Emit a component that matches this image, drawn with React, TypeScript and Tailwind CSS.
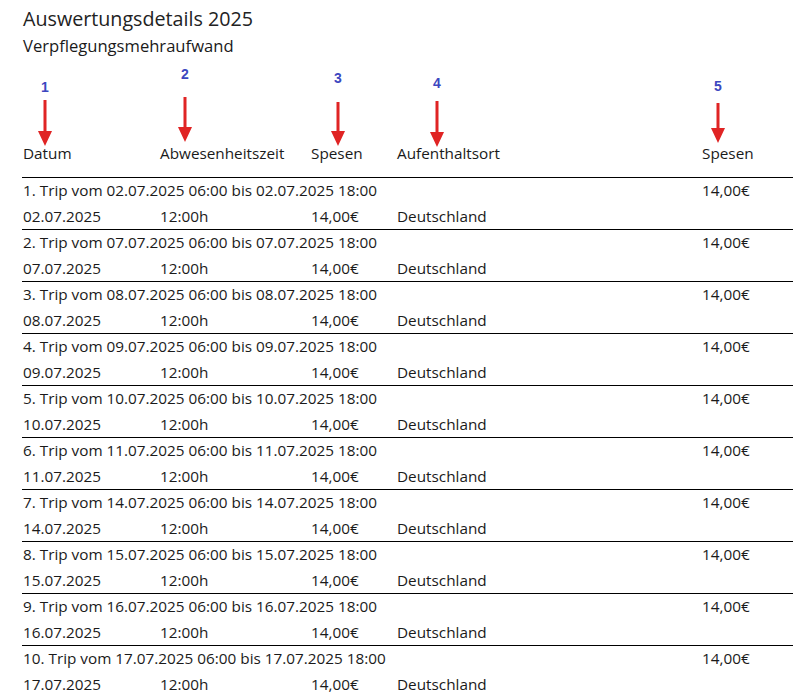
import React from "react";

const trips = [
  { n: 1, d: "02.07.2025" },
  { n: 2, d: "07.07.2025" },
  { n: 3, d: "08.07.2025" },
  { n: 4, d: "09.07.2025" },
  { n: 5, d: "10.07.2025" },
  { n: 6, d: "11.07.2025" },
  { n: 7, d: "14.07.2025" },
  { n: 8, d: "15.07.2025" },
  { n: 9, d: "16.07.2025" },
  { n: 10, d: "17.07.2025" },
];

function Marker({ x, numY, top, tip, label }: { x: number; numY: number; top: number; tip: number; label: string }) {
  const h = tip - top;
  return (
    <>
      <div
        className="absolute w-[20px] -ml-[10px] text-center text-[14px] leading-[16px] font-bold text-[#3c47c0] [font-family:'Liberation_Sans',Arial,sans-serif]"
        style={{ left: x, top: numY - 8 }}
      >
        {label}
      </div>
      <svg
        className="absolute"
        width={16}
        height={h}
        viewBox={`0 0 16 ${h}`}
        style={{ left: x - 8, top }}
      >
        <rect x={6.5} y={0} width={3} height={h - 14} fill="#e02424" />
        <polygon points={`1,${h - 15} 15,${h - 15} 8,${h}`} fill="#e02424" />
      </svg>
    </>
  );
}

export default function App() {
  return (
    <div className="relative w-[805px] h-[698px] overflow-hidden bg-white text-[#1a1a1a] [font-family:'Open_Sans',sans-serif]">
      <div className="pl-[23px] pt-[5px] text-[19.7px] leading-[28px] text-[#222]">Auswertungsdetails 2025</div>
      <div className="pl-[23px] mt-[2px] text-[16.6px] leading-[21px]">Verpflegungsmehraufwand</div>

      <Marker x={45} numY={87} top={100} tip={146} label="1" />
      <Marker x={185} numY={74} top={97} tip={142} label="2" />
      <Marker x={338} numY={78} top={102} tip={146} label="3" />
      <Marker x={437} numY={83} top={101} tip={147} label="4" />
      <Marker x={718} numY={86} top={103} tip={143} label="5" />

      <div className="ml-[22px] w-[771px] pt-[84px] text-[15.3px]">
        <div className="grid grid-cols-[137px_151px_86px_305px_1fr] pl-[1px] leading-[26px] pb-[11px]">
          <div>Datum</div>
          <div>Abwesenheitszeit</div>
          <div>Spesen</div>
          <div>Aufenthaltsort</div>
          <div>Spesen</div>
        </div>
        {trips.map((t) => (
          <div key={t.n} className="border-t border-black grid grid-cols-[137px_151px_86px_305px_1fr] pl-[1px]">
            <div className="col-span-4 leading-[25px] whitespace-nowrap">
              {t.n}. Trip vom {t.d} 06:00 bis {t.d} 18:00
            </div>
            <div className="leading-[25px]">14,00€</div>
            <div className="leading-[26px]">{t.d}</div>
            <div className="leading-[26px]">12:00h</div>
            <div className="leading-[26px]">14,00€</div>
            <div className="leading-[26px]">Deutschland</div>
            <div />
          </div>
        ))}
      </div>
    </div>
  );
}
